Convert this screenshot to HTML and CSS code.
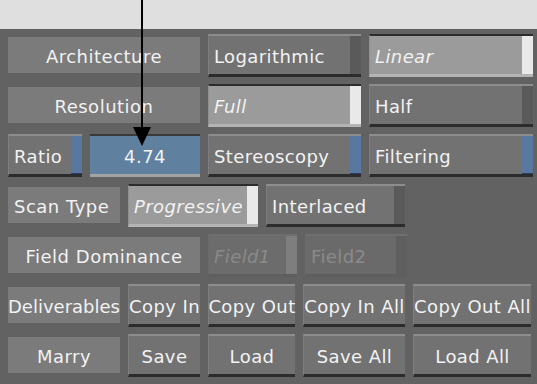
FILE: index.html
```html
<!DOCTYPE html>
<html lang="en">
<head>
    <meta charset="UTF-8">
    <title>Format Settings</title>
    <link rel="stylesheet" href="styles.css">
</head>
<body>
    <div class="top-band"></div>
    <div class="panel">
        <div class="row">
            <div class="label w192">Architecture</div>
            <div class="btn w153">Logarithmic<span class="strip"></span></div>
            <div class="btn on w164">Linear<span class="strip"></span></div>
        </div>
        <div class="row">
            <div class="label w192">Resolution</div>
            <div class="btn on w153">Full<span class="strip"></span></div>
            <div class="btn w164">Half<span class="strip"></span></div>
        </div>
        <div class="row">
            <div class="btn blue w74">Ratio<span class="strip"></span></div>
            <div class="field w110">4.74</div>
            <div class="btn blue w153">Stereoscopy<span class="strip"></span></div>
            <div class="btn blue w164">Filtering<span class="strip"></span></div>
        </div>
        <div class="row">
            <div class="label w112 left">Scan Type</div>
            <div class="btn on w130">Progressive<span class="strip"></span></div>
            <div class="btn w139">Interlaced<span class="strip"></span></div>
        </div>
        <div class="row">
            <div class="label w192">Field Dominance</div>
            <div class="btn off on w89">Field1<span class="strip"></span></div>
            <div class="btn off w102">Field2<span class="strip"></span></div>
        </div>
        <div class="row">
            <div class="label w112 tight">Deliverables</div>
            <div class="btn plain w72">Copy In</div>
            <div class="btn plain w87">Copy Out</div>
            <div class="btn plain w102">Copy In All</div>
            <div class="btn plain w118">Copy Out All</div>
        </div>
        <div class="row">
            <div class="label w112">Marry</div>
            <div class="btn plain w72">Save</div>
            <div class="btn plain w87">Load</div>
            <div class="btn plain w102">Save All</div>
            <div class="btn plain w118">Load All</div>
        </div>
    </div>
    <svg class="pointer" width="24" height="150" viewBox="0 0 24 150">
        <rect x="11" y="0" width="2" height="132" fill="#000"/>
        <polygon points="3,127 21,127 12,146" fill="#000"/>
    </svg>
</body>
</html>
```

FILE: styles.css
```css
body {
    margin: 0;
    width: 537px;
    height: 384px;
    overflow: hidden;
    background: #626262;
    font-family: "DejaVu Sans", sans-serif;
    font-size: 18px;
    color: #f2f2f2;
    position: relative;
}
.top-band {
    height: 29px;
    background: #dfdfdf;
}
.panel {
    display: flex;
    flex-direction: column;
    gap: 7px;
    padding: 5px 4px 0 8px;
}
.row {
    display: flex;
    gap: 8px;
    height: 43px;
}
.label {
    display: flex;
    align-items: center;
    justify-content: center;
    box-sizing: border-box;
    background: #7b7b7b;
    margin: 3px 0 4px;
    padding-top: 2px;
    letter-spacing: 0.5px;
    white-space: nowrap;
}
.label.left {
    justify-content: flex-start;
    padding-left: 6px;
}
.label.tight {
    letter-spacing: 0;
}
.btn {
    position: relative;
    display: flex;
    align-items: center;
    padding: 3px 0 0 5px;
    background: #727272;
    border-top: 2px solid #8d8d8d;
    border-left: 1px solid #7e7e7e;
    border-bottom: 3px solid #2c2c2c;
    box-sizing: border-box;
    white-space: nowrap;
    letter-spacing: 0.4px;
}
.btn .strip {
    position: absolute;
    right: 0;
    top: 0;
    bottom: 0;
    width: 11px;
    background: #5a5a5a;
}
.btn.on {
    background: #9b9b9b;
    border-top: 2px solid #2c2c2c;
    border-left: 1px solid #909090;
    border-bottom: 3px solid #b4b4b4;
    font-style: italic;
}
.btn.on .strip {
    background: #e9e9e9;
}
.btn.blue .strip {
    background: #5878a0;
    border-bottom: 1px solid #2a3a6a;
}
.btn.off {
    background: #6a6a6a;
    border-top: 2px solid #6f6f6f;
    border-bottom: 3px solid #5e5e5e;
    border-left: 1px solid #6a6a6a;
    color: #8a8a8a;
}
.btn.off.on {
    background: #6c6c6c;
}
.btn.off.on .strip {
    background: #7e7e7e;
}
.btn.off .strip {
    background: #5f5f5f;
}
.btn.plain {
    padding: 3px 0 0;
    justify-content: center;
}
.field {
    display: flex;
    align-items: center;
    justify-content: center;
    padding-top: 2px;
    background: #60809f;
    border-top: 2px solid #3a3a3a;
    border-bottom: 3px solid #a3a3a3;
    box-sizing: border-box;
    letter-spacing: 0.5px;
}
.pointer {
    position: absolute;
    left: 130px;
    top: 0;
}
.w72 { width: 72px; }
.w74 { width: 74px; }
.w87 { width: 87px; }
.w89 { width: 89px; }
.w102 { width: 102px; }
.w110 { width: 110px; }
.w112 { width: 112px; }
.w118 { width: 118px; }
.w130 { width: 130px; }
.w139 { width: 139px; }
.w153 { width: 153px; }
.w164 { width: 164px; }
.w192 { width: 192px; }
```
